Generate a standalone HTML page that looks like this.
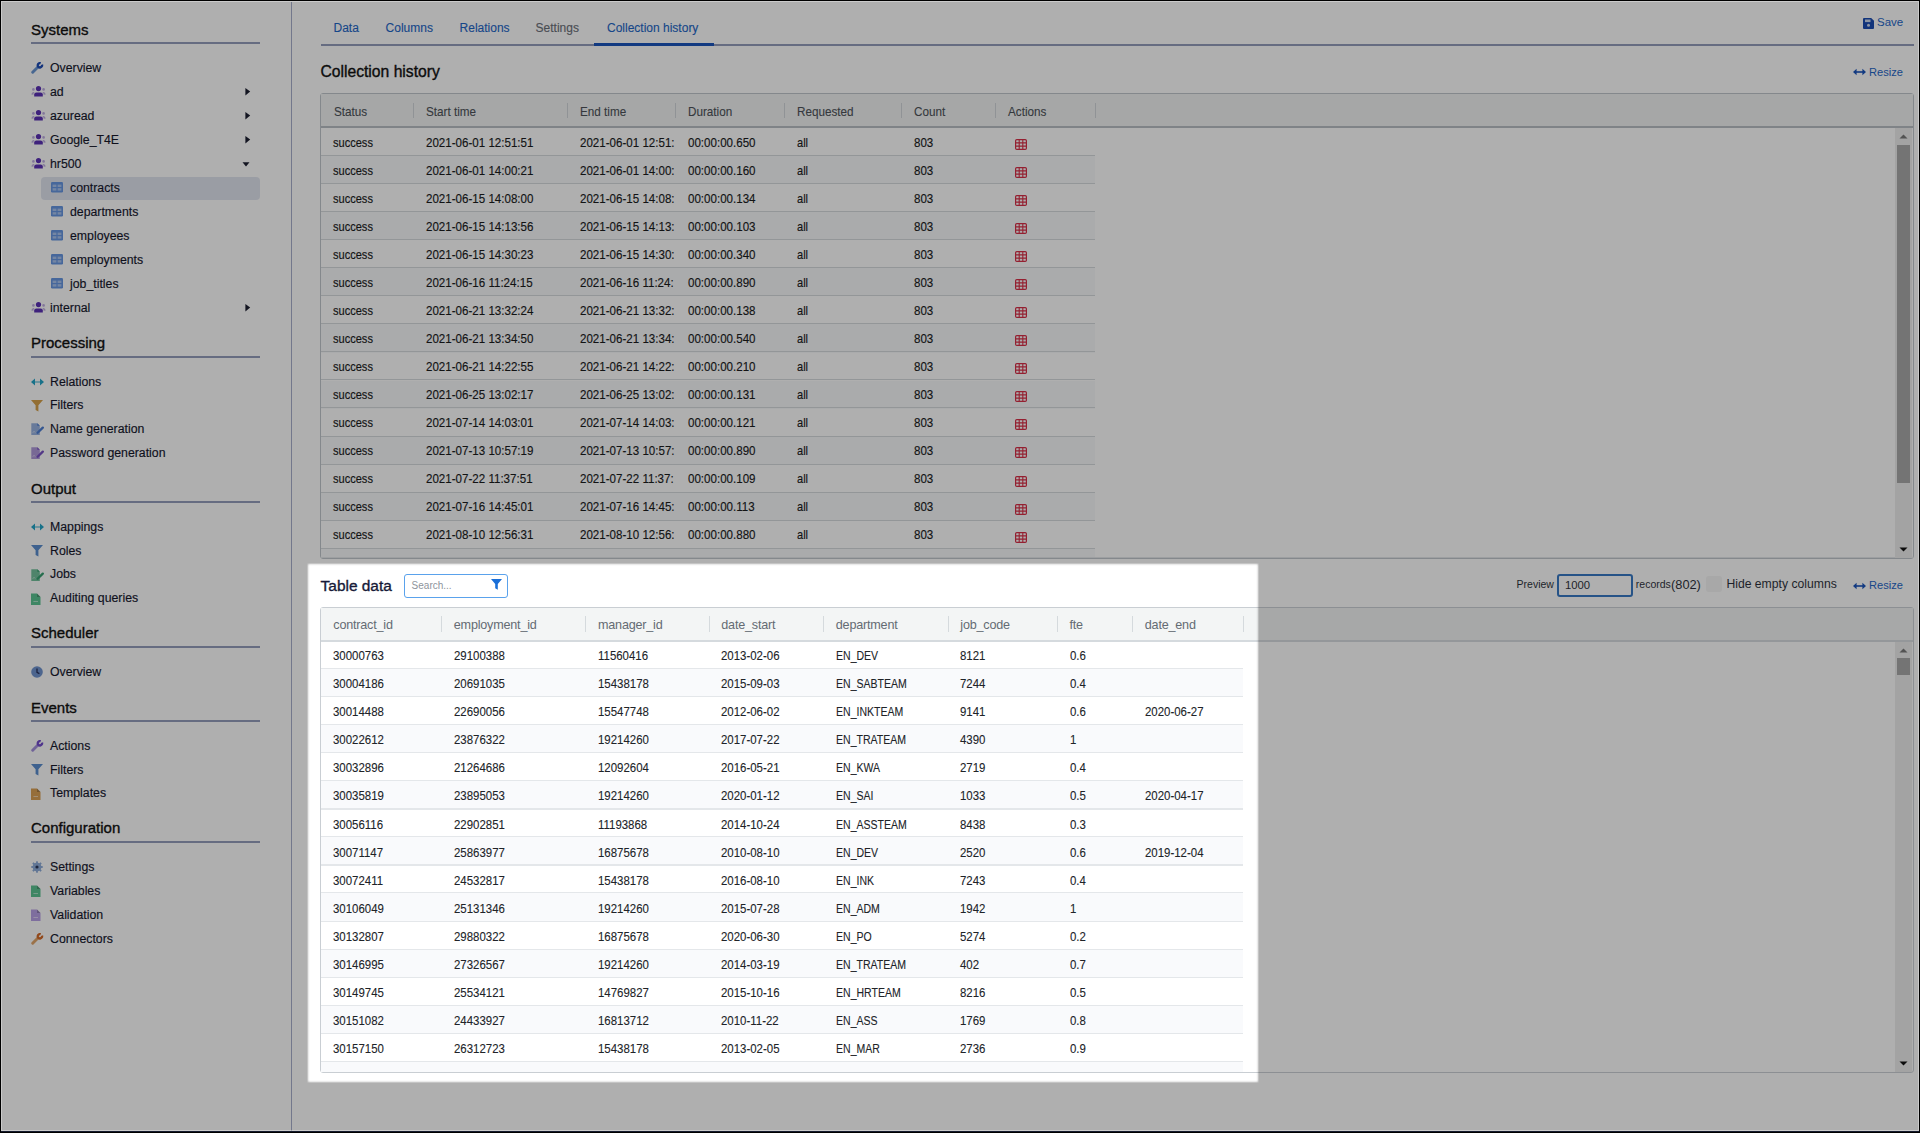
<!DOCTYPE html>
<html><head><meta charset="utf-8"><title>Collection history</title>
<style>
html,body{margin:0;padding:0;}
body{width:1920px;height:1133px;overflow:hidden;background:#000;position:relative;font-family:"Liberation Sans",sans-serif;}
#frame{position:absolute;left:0;top:0;width:1920px;height:1133px;background:#fff;overflow:hidden;}
#frame .t{position:absolute;white-space:nowrap;}
#frame .r{position:absolute;}
#frame .i{position:absolute;display:block;}
#hl{position:absolute;left:307px;top:562.5px;width:952px;height:520px;border-radius:2px;box-shadow:inset 0 0 2px 1px rgba(33,33,33,.36),0 0 0 5000px rgba(33,33,33,.36);pointer-events:none;}
#edge{position:absolute;left:1px;top:1px;width:1918px;height:1130px;box-sizing:border-box;border:1px solid rgba(255,255,255,.35);}
#blk{position:absolute;left:0;top:0;width:1920px;height:1133px;box-sizing:border-box;border:1px solid #000;border-bottom-width:2px;}
#bot{position:absolute;left:1px;top:1131px;width:1918px;height:1px;background:#141a2c;}
</style></head>
<body>
<div id="frame">
<div class="t" style="left:31.00px;top:22.40px;font-size:15px;line-height:15px;color:#000000;-webkit-text-stroke:0.35px #000000;">Systems</div>
<div class="r" style="left:31px;top:42px;width:229px;height:2px;background:#8d97b8;"></div>
<svg class="i" style="left:31px;top:62px" width="13" height="12" viewBox="0 0 13 12"><path d="M1.7 10.3 L7.2 4.8" stroke="#5f8fd0" stroke-width="2.9" stroke-linecap="round"/><path d="M10.97 2.55 A2.2 2.2 0 1 1 9.65 1.23" fill="none" stroke="#0d3fb0" stroke-width="2.3"/></svg>
<div class="t" style="left:50.00px;top:61.59px;font-size:12.3px;line-height:12.3px;color:#05071a;-webkit-text-stroke:0.15px #05071a;">Overview</div>
<svg class="i" style="left:31px;top:86px" width="15" height="11" viewBox="0 0 15 11"><circle cx="7.5" cy="2.6" r="2.6" fill="#4f22b0"/><path d="M3.2 10.6 V8.6 Q3.2 6.4 5.4 6.4 H9.6 Q11.8 6.4 11.8 8.6 V10.6Z" fill="#4f22b0"/><circle cx="2.4" cy="3.4" r="1.3" fill="#4f22b0" opacity=".4"/><circle cx="12.6" cy="3.4" r="1.3" fill="#4f22b0" opacity=".4"/><path d="M0.3 8.6 Q0.6 6 2.6 5.9 L3.6 6 Q2.4 7 2.3 8.8Z" fill="#4f22b0" opacity=".4"/><path d="M14.7 8.6 Q14.4 6 12.4 5.9 L11.4 6 Q12.6 7 12.7 8.8Z" fill="#4f22b0" opacity=".4"/></svg>
<div class="t" style="left:50.00px;top:85.59px;font-size:12.3px;line-height:12.3px;color:#05071a;-webkit-text-stroke:0.15px #05071a;">ad</div>
<svg class="i" style="left:244.6px;top:88px" width="6" height="8" viewBox="0 0 6 8"><path d="M0.4 0 L5.2 3.6 L0.4 7.5Z" fill="#0c0f22"/></svg>
<svg class="i" style="left:31px;top:110px" width="15" height="11" viewBox="0 0 15 11"><circle cx="7.5" cy="2.6" r="2.6" fill="#4f22b0"/><path d="M3.2 10.6 V8.6 Q3.2 6.4 5.4 6.4 H9.6 Q11.8 6.4 11.8 8.6 V10.6Z" fill="#4f22b0"/><circle cx="2.4" cy="3.4" r="1.3" fill="#4f22b0" opacity=".4"/><circle cx="12.6" cy="3.4" r="1.3" fill="#4f22b0" opacity=".4"/><path d="M0.3 8.6 Q0.6 6 2.6 5.9 L3.6 6 Q2.4 7 2.3 8.8Z" fill="#4f22b0" opacity=".4"/><path d="M14.7 8.6 Q14.4 6 12.4 5.9 L11.4 6 Q12.6 7 12.7 8.8Z" fill="#4f22b0" opacity=".4"/></svg>
<div class="t" style="left:50.00px;top:109.59px;font-size:12.3px;line-height:12.3px;color:#05071a;-webkit-text-stroke:0.15px #05071a;">azuread</div>
<svg class="i" style="left:244.6px;top:112px" width="6" height="8" viewBox="0 0 6 8"><path d="M0.4 0 L5.2 3.6 L0.4 7.5Z" fill="#0c0f22"/></svg>
<svg class="i" style="left:31px;top:134px" width="15" height="11" viewBox="0 0 15 11"><circle cx="7.5" cy="2.6" r="2.6" fill="#4f22b0"/><path d="M3.2 10.6 V8.6 Q3.2 6.4 5.4 6.4 H9.6 Q11.8 6.4 11.8 8.6 V10.6Z" fill="#4f22b0"/><circle cx="2.4" cy="3.4" r="1.3" fill="#4f22b0" opacity=".4"/><circle cx="12.6" cy="3.4" r="1.3" fill="#4f22b0" opacity=".4"/><path d="M0.3 8.6 Q0.6 6 2.6 5.9 L3.6 6 Q2.4 7 2.3 8.8Z" fill="#4f22b0" opacity=".4"/><path d="M14.7 8.6 Q14.4 6 12.4 5.9 L11.4 6 Q12.6 7 12.7 8.8Z" fill="#4f22b0" opacity=".4"/></svg>
<div class="t" style="left:50.00px;top:133.59px;font-size:12.3px;line-height:12.3px;color:#05071a;-webkit-text-stroke:0.15px #05071a;">Google_T4E</div>
<svg class="i" style="left:244.6px;top:136px" width="6" height="8" viewBox="0 0 6 8"><path d="M0.4 0 L5.2 3.6 L0.4 7.5Z" fill="#0c0f22"/></svg>
<svg class="i" style="left:31px;top:158px" width="15" height="11" viewBox="0 0 15 11"><circle cx="7.5" cy="2.6" r="2.6" fill="#4f22b0"/><path d="M3.2 10.6 V8.6 Q3.2 6.4 5.4 6.4 H9.6 Q11.8 6.4 11.8 8.6 V10.6Z" fill="#4f22b0"/><circle cx="2.4" cy="3.4" r="1.3" fill="#4f22b0" opacity=".4"/><circle cx="12.6" cy="3.4" r="1.3" fill="#4f22b0" opacity=".4"/><path d="M0.3 8.6 Q0.6 6 2.6 5.9 L3.6 6 Q2.4 7 2.3 8.8Z" fill="#4f22b0" opacity=".4"/><path d="M14.7 8.6 Q14.4 6 12.4 5.9 L11.4 6 Q12.6 7 12.7 8.8Z" fill="#4f22b0" opacity=".4"/></svg>
<div class="t" style="left:50.00px;top:157.59px;font-size:12.3px;line-height:12.3px;color:#05071a;-webkit-text-stroke:0.15px #05071a;">hr500</div>
<svg class="i" style="left:242px;top:162px" width="8" height="6" viewBox="0 0 8 6"><path d="M0.5 0.3 H7.5 L4 4.4Z" fill="#0c0f22"/></svg>
<div class="r" style="left:41px;top:177px;width:219px;height:23px;background:#dfe3ee;border-radius:4px;"></div>
<svg class="i" style="left:51px;top:182px" width="12" height="11" viewBox="0 0 12 11"><rect x="0" y="0" width="12" height="10.5" rx="1.2" fill="#5b8fe0"/><rect x="1.6" y="2.6" width="3.8" height="2.4" fill="#dfe8f8" opacity=".55"/><rect x="6.6" y="2.6" width="3.8" height="2.4" fill="#dfe8f8" opacity=".55"/><rect x="1.6" y="6.2" width="3.8" height="2.4" fill="#dfe8f8" opacity=".55"/><rect x="6.6" y="6.2" width="3.8" height="2.4" fill="#dfe8f8" opacity=".55"/></svg>
<div class="t" style="left:70.00px;top:181.59px;font-size:12.3px;line-height:12.3px;color:#05071a;-webkit-text-stroke:0.15px #05071a;">contracts</div>
<svg class="i" style="left:51px;top:206px" width="12" height="11" viewBox="0 0 12 11"><rect x="0" y="0" width="12" height="10.5" rx="1.2" fill="#5b8fe0"/><rect x="1.6" y="2.6" width="3.8" height="2.4" fill="#dfe8f8" opacity=".55"/><rect x="6.6" y="2.6" width="3.8" height="2.4" fill="#dfe8f8" opacity=".55"/><rect x="1.6" y="6.2" width="3.8" height="2.4" fill="#dfe8f8" opacity=".55"/><rect x="6.6" y="6.2" width="3.8" height="2.4" fill="#dfe8f8" opacity=".55"/></svg>
<div class="t" style="left:70.00px;top:205.59px;font-size:12.3px;line-height:12.3px;color:#05071a;-webkit-text-stroke:0.15px #05071a;">departments</div>
<svg class="i" style="left:51px;top:230px" width="12" height="11" viewBox="0 0 12 11"><rect x="0" y="0" width="12" height="10.5" rx="1.2" fill="#5b8fe0"/><rect x="1.6" y="2.6" width="3.8" height="2.4" fill="#dfe8f8" opacity=".55"/><rect x="6.6" y="2.6" width="3.8" height="2.4" fill="#dfe8f8" opacity=".55"/><rect x="1.6" y="6.2" width="3.8" height="2.4" fill="#dfe8f8" opacity=".55"/><rect x="6.6" y="6.2" width="3.8" height="2.4" fill="#dfe8f8" opacity=".55"/></svg>
<div class="t" style="left:70.00px;top:229.59px;font-size:12.3px;line-height:12.3px;color:#05071a;-webkit-text-stroke:0.15px #05071a;">employees</div>
<svg class="i" style="left:51px;top:254px" width="12" height="11" viewBox="0 0 12 11"><rect x="0" y="0" width="12" height="10.5" rx="1.2" fill="#5b8fe0"/><rect x="1.6" y="2.6" width="3.8" height="2.4" fill="#dfe8f8" opacity=".55"/><rect x="6.6" y="2.6" width="3.8" height="2.4" fill="#dfe8f8" opacity=".55"/><rect x="1.6" y="6.2" width="3.8" height="2.4" fill="#dfe8f8" opacity=".55"/><rect x="6.6" y="6.2" width="3.8" height="2.4" fill="#dfe8f8" opacity=".55"/></svg>
<div class="t" style="left:70.00px;top:253.59px;font-size:12.3px;line-height:12.3px;color:#05071a;-webkit-text-stroke:0.15px #05071a;">employments</div>
<svg class="i" style="left:51px;top:278px" width="12" height="11" viewBox="0 0 12 11"><rect x="0" y="0" width="12" height="10.5" rx="1.2" fill="#5b8fe0"/><rect x="1.6" y="2.6" width="3.8" height="2.4" fill="#dfe8f8" opacity=".55"/><rect x="6.6" y="2.6" width="3.8" height="2.4" fill="#dfe8f8" opacity=".55"/><rect x="1.6" y="6.2" width="3.8" height="2.4" fill="#dfe8f8" opacity=".55"/><rect x="6.6" y="6.2" width="3.8" height="2.4" fill="#dfe8f8" opacity=".55"/></svg>
<div class="t" style="left:70.00px;top:277.59px;font-size:12.3px;line-height:12.3px;color:#05071a;-webkit-text-stroke:0.15px #05071a;">job_titles</div>
<svg class="i" style="left:31px;top:302px" width="15" height="11" viewBox="0 0 15 11"><circle cx="7.5" cy="2.6" r="2.6" fill="#4f22b0"/><path d="M3.2 10.6 V8.6 Q3.2 6.4 5.4 6.4 H9.6 Q11.8 6.4 11.8 8.6 V10.6Z" fill="#4f22b0"/><circle cx="2.4" cy="3.4" r="1.3" fill="#4f22b0" opacity=".4"/><circle cx="12.6" cy="3.4" r="1.3" fill="#4f22b0" opacity=".4"/><path d="M0.3 8.6 Q0.6 6 2.6 5.9 L3.6 6 Q2.4 7 2.3 8.8Z" fill="#4f22b0" opacity=".4"/><path d="M14.7 8.6 Q14.4 6 12.4 5.9 L11.4 6 Q12.6 7 12.7 8.8Z" fill="#4f22b0" opacity=".4"/></svg>
<div class="t" style="left:50.00px;top:301.59px;font-size:12.3px;line-height:12.3px;color:#05071a;-webkit-text-stroke:0.15px #05071a;">internal</div>
<svg class="i" style="left:244.6px;top:304px" width="6" height="8" viewBox="0 0 6 8"><path d="M0.4 0 L5.2 3.6 L0.4 7.5Z" fill="#0c0f22"/></svg>
<div class="t" style="left:31.00px;top:335.40px;font-size:15px;line-height:15px;color:#000000;-webkit-text-stroke:0.35px #000000;">Processing</div>
<div class="r" style="left:31px;top:356px;width:229px;height:2px;background:#8d97b8;"></div>
<svg class="i" style="left:31px;top:378.0px" width="13" height="8" viewBox="0 0 13 8"><path d="M0 4 L4 0.4 V7.6Z M13 4 L9 0.4 V7.6Z" fill="#139fc4"/><rect x="3" y="3.2" width="7" height="1.6" fill="#139fc4" opacity=".55"/></svg>
<div class="t" style="left:50.00px;top:375.59px;font-size:12.3px;line-height:12.3px;color:#05071a;-webkit-text-stroke:0.15px #05071a;">Relations</div>
<svg class="i" style="left:31px;top:399.7px" width="12" height="12" viewBox="0 0 12 12"><path d="M0 0 H12 L7.4 5.2 V11.6 L4.6 10 V5.2Z" fill="#d39a3c"/></svg>
<div class="t" style="left:50.00px;top:399.29px;font-size:12.3px;line-height:12.3px;color:#05071a;-webkit-text-stroke:0.15px #05071a;">Filters</div>
<svg class="i" style="left:31px;top:423.4px" width="13" height="12" viewBox="0 0 13 12"><path d="M0.3 0.2 H6.3 L8.8 2.7 V11.9 H0.3Z" fill="#7e9fd8" opacity=".85"/><path d="M6.3 0.2 V2.7 H8.8Z" fill="#3f74d0"/><path d="M1.6 10 L3 8.2 L4.2 9.6" stroke="#fff" stroke-width=".7" fill="none" opacity=".6"/><path d="M6.6 9.8 L11.8 4.6" stroke="#3f74d0" stroke-width="2.3" stroke-linecap="round"/></svg>
<div class="t" style="left:50.00px;top:422.99px;font-size:12.3px;line-height:12.3px;color:#05071a;-webkit-text-stroke:0.15px #05071a;">Name generation</div>
<svg class="i" style="left:31px;top:447.1px" width="13" height="12" viewBox="0 0 13 12"><path d="M0.3 0.2 H6.3 L8.8 2.7 V11.9 H0.3Z" fill="#9a7fd0" opacity=".85"/><path d="M6.3 0.2 V2.7 H8.8Z" fill="#6f46c0"/><path d="M1.6 10 L3 8.2 L4.2 9.6" stroke="#fff" stroke-width=".7" fill="none" opacity=".6"/><path d="M6.6 9.8 L11.8 4.6" stroke="#6f46c0" stroke-width="2.3" stroke-linecap="round"/></svg>
<div class="t" style="left:50.00px;top:446.69px;font-size:12.3px;line-height:12.3px;color:#05071a;-webkit-text-stroke:0.15px #05071a;">Password generation</div>
<div class="t" style="left:31.00px;top:481.10px;font-size:15px;line-height:15px;color:#000000;-webkit-text-stroke:0.35px #000000;">Output</div>
<div class="r" style="left:31px;top:501px;width:229px;height:2px;background:#8d97b8;"></div>
<svg class="i" style="left:31px;top:523.4px" width="13" height="8" viewBox="0 0 13 8"><path d="M0 4 L4 0.4 V7.6Z M13 4 L9 0.4 V7.6Z" fill="#139fc4"/><rect x="3" y="3.2" width="7" height="1.6" fill="#139fc4" opacity=".55"/></svg>
<div class="t" style="left:50.00px;top:520.99px;font-size:12.3px;line-height:12.3px;color:#05071a;-webkit-text-stroke:0.15px #05071a;">Mappings</div>
<svg class="i" style="left:31px;top:545.1px" width="12" height="12" viewBox="0 0 12 12"><path d="M0 0 H12 L7.4 5.2 V11.6 L4.6 10 V5.2Z" fill="#4f86cc"/></svg>
<div class="t" style="left:50.00px;top:544.69px;font-size:12.3px;line-height:12.3px;color:#05071a;-webkit-text-stroke:0.15px #05071a;">Roles</div>
<svg class="i" style="left:31px;top:568.8px" width="13" height="12" viewBox="0 0 13 12"><path d="M0.3 0.2 H6.3 L8.8 2.7 V11.9 H0.3Z" fill="#4fb083" opacity=".85"/><path d="M6.3 0.2 V2.7 H8.8Z" fill="#2a9a68"/><path d="M1.6 10 L3 8.2 L4.2 9.6" stroke="#fff" stroke-width=".7" fill="none" opacity=".6"/><path d="M6.6 9.8 L11.8 4.6" stroke="#2a9a68" stroke-width="2.3" stroke-linecap="round"/></svg>
<div class="t" style="left:50.00px;top:568.39px;font-size:12.3px;line-height:12.3px;color:#05071a;-webkit-text-stroke:0.15px #05071a;">Jobs</div>
<svg class="i" style="left:31px;top:592.5px" width="10" height="12" viewBox="0 0 10 12"><path d="M0 0.5 H6 L9.5 4 V12 H0Z" fill="#4fbf8a"/><path d="M6 0.5 V4 H9.5Z" fill="#000" opacity=".25"/><rect x="2.4" y="8" width="4.6" height="1" fill="#fff" opacity=".5"/></svg>
<div class="t" style="left:50.00px;top:592.09px;font-size:12.3px;line-height:12.3px;color:#05071a;-webkit-text-stroke:0.15px #05071a;">Auditing queries</div>
<div class="t" style="left:31.00px;top:625.40px;font-size:15px;line-height:15px;color:#000000;-webkit-text-stroke:0.35px #000000;">Scheduler</div>
<div class="r" style="left:31px;top:646px;width:229px;height:2px;background:#8d97b8;"></div>
<svg class="i" style="left:31px;top:666px" width="12" height="12" viewBox="0 0 12 12"><circle cx="6" cy="6" r="5.8" fill="#3f6fbf" opacity=".8"/><path d="M6 2.6 V6.4 L8.4 7.6" stroke="#1a2350" stroke-width="1.3" fill="none"/></svg>
<div class="t" style="left:50.00px;top:665.59px;font-size:12.3px;line-height:12.3px;color:#05071a;-webkit-text-stroke:0.15px #05071a;">Overview</div>
<div class="t" style="left:31.00px;top:699.60px;font-size:15px;line-height:15px;color:#000000;-webkit-text-stroke:0.35px #000000;">Events</div>
<div class="r" style="left:31px;top:720px;width:229px;height:2px;background:#8d97b8;"></div>
<svg class="i" style="left:31px;top:740.1px" width="13" height="12" viewBox="0 0 13 12"><path d="M1.7 10.3 L7.2 4.8" stroke="#9f88dc" stroke-width="2.9" stroke-linecap="round"/><path d="M10.97 2.55 A2.2 2.2 0 1 1 9.65 1.23" fill="none" stroke="#6a3fc8" stroke-width="2.3"/></svg>
<div class="t" style="left:50.00px;top:739.69px;font-size:12.3px;line-height:12.3px;color:#05071a;-webkit-text-stroke:0.15px #05071a;">Actions</div>
<svg class="i" style="left:31px;top:764.0px" width="12" height="12" viewBox="0 0 12 12"><path d="M0 0 H12 L7.4 5.2 V11.6 L4.6 10 V5.2Z" fill="#4f86cc"/></svg>
<div class="t" style="left:50.00px;top:763.59px;font-size:12.3px;line-height:12.3px;color:#05071a;-webkit-text-stroke:0.15px #05071a;">Filters</div>
<svg class="i" style="left:31px;top:787.9px" width="10" height="12" viewBox="0 0 10 12"><path d="M0 0.5 H6 L9.5 4 V12 H0Z" fill="#d89a48"/><path d="M6 0.5 V4 H9.5Z" fill="#000" opacity=".25"/><rect x="2.4" y="8" width="4.6" height="1" fill="#fff" opacity=".5"/></svg>
<div class="t" style="left:50.00px;top:787.49px;font-size:12.3px;line-height:12.3px;color:#05071a;-webkit-text-stroke:0.15px #05071a;">Templates</div>
<div class="t" style="left:31.00px;top:820.10px;font-size:15px;line-height:15px;color:#000000;-webkit-text-stroke:0.35px #000000;">Configuration</div>
<div class="r" style="left:31px;top:841px;width:229px;height:2px;background:#8d97b8;"></div>
<svg class="i" style="left:31px;top:861.2px" width="12" height="12" viewBox="0 0 12 12"><path d="M10.29 5.04 L11.84 5.18 L11.84 6.82 L10.29 6.96 L9.72 8.36 L10.71 9.55 L9.55 10.71 L8.36 9.72 L6.96 10.29 L6.82 11.84 L5.18 11.84 L5.04 10.29 L3.64 9.72 L2.45 10.71 L1.29 9.55 L2.28 8.36 L1.71 6.96 L0.16 6.82 L0.16 5.18 L1.71 5.04 L2.28 3.64 L1.29 2.45 L2.45 1.29 L3.64 2.28 L5.04 1.71 L5.18 0.16 L6.82 0.16 L6.96 1.71 L8.36 2.28 L9.55 1.29 L10.71 2.45 L9.72 3.64Z" fill="#86a6d6"/><circle cx="6" cy="6" r="1.6" fill="#1c2a50"/></svg>
<div class="t" style="left:50.00px;top:860.79px;font-size:12.3px;line-height:12.3px;color:#05071a;-webkit-text-stroke:0.15px #05071a;">Settings</div>
<svg class="i" style="left:31px;top:885.2px" width="10" height="12" viewBox="0 0 10 12"><path d="M0 0.5 H6 L9.5 4 V12 H0Z" fill="#4fbf8a"/><path d="M6 0.5 V4 H9.5Z" fill="#000" opacity=".25"/><rect x="2.4" y="8" width="4.6" height="1" fill="#fff" opacity=".5"/></svg>
<div class="t" style="left:50.00px;top:884.79px;font-size:12.3px;line-height:12.3px;color:#05071a;-webkit-text-stroke:0.15px #05071a;">Variables</div>
<svg class="i" style="left:31px;top:909.2px" width="10" height="12" viewBox="0 0 10 12"><path d="M0 0.5 H6 L9.5 4 V12 H0Z" fill="#b39ae4"/><path d="M6 0.5 V4 H9.5Z" fill="#000" opacity=".25"/><rect x="2.4" y="8" width="4.6" height="1" fill="#fff" opacity=".5"/></svg>
<div class="t" style="left:50.00px;top:908.79px;font-size:12.3px;line-height:12.3px;color:#05071a;-webkit-text-stroke:0.15px #05071a;">Validation</div>
<svg class="i" style="left:31px;top:933.2px" width="13" height="12" viewBox="0 0 13 12"><path d="M1.7 10.3 L7.2 4.8" stroke="#e0a060" stroke-width="2.9" stroke-linecap="round"/><path d="M10.97 2.55 A2.2 2.2 0 1 1 9.65 1.23" fill="none" stroke="#d2601a" stroke-width="2.3"/></svg>
<div class="t" style="left:50.00px;top:932.79px;font-size:12.3px;line-height:12.3px;color:#05071a;-webkit-text-stroke:0.15px #05071a;">Connectors</div>
<div class="r" style="left:291px;top:2px;width:1px;height:1129px;background:#a2aac8;"></div>
<div class="t" style="left:333.50px;top:21.74px;font-size:12px;line-height:12px;color:#0f5bc4;-webkit-text-stroke:0.12px #0f5bc4;">Data</div>
<div class="t" style="left:385.60px;top:21.74px;font-size:12px;line-height:12px;color:#0f5bc4;-webkit-text-stroke:0.12px #0f5bc4;">Columns</div>
<div class="t" style="left:459.60px;top:21.74px;font-size:12px;line-height:12px;color:#0f5bc4;-webkit-text-stroke:0.12px #0f5bc4;">Relations</div>
<div class="t" style="left:535.60px;top:21.74px;font-size:12px;line-height:12px;color:#5f6670;-webkit-text-stroke:0.12px #5f6670;">Settings</div>
<div class="t" style="left:607.00px;top:21.74px;font-size:12px;line-height:12px;color:#0f5bc4;-webkit-text-stroke:0.12px #0f5bc4;">Collection history</div>
<div class="r" style="left:321px;top:44px;width:1593px;height:2px;background:#8d97b8;"></div>
<div class="r" style="left:594px;top:43px;width:120px;height:3px;background:#0a48b8;"></div>
<svg class="i" style="left:1863px;top:18px" width="11" height="11" viewBox="0 0 11 11"><path d="M0 1 Q0 0 1 0 H8.2 L11 2.8 V10 Q11 11 10 11 H1 Q0 11 0 10Z" fill="#0a3fae"/><rect x="2" y="1.5" width="5.5" height="2.6" fill="#c9d6ee"/><circle cx="5.5" cy="7.3" r="1.5" fill="#c9d6ee"/></svg>
<div class="t" style="left:1877.00px;top:17.47px;font-size:11.5px;line-height:11.5px;color:#0f5bc4;">Save</div>
<div class="t" style="left:320.40px;top:63.71px;font-size:15.7px;line-height:15.7px;color:#000000;-webkit-text-stroke:0.35px #000000;">Collection history</div>
<svg class="i" style="left:1853px;top:68px" width="13" height="8" viewBox="0 0 13 8"><path d="M0 4 L3.6 0.8 V7.2Z M13 4 L9.4 0.8 V7.2Z" fill="#0a48b8"/><rect x="3" y="3.2" width="7" height="1.6" fill="#0a48b8"/></svg>
<div class="t" style="left:1869.00px;top:66.60px;font-size:11.1px;line-height:11.1px;color:#0f5bc4;">Resize</div>
<div class="r" style="left:320px;top:93px;width:1594px;height:466px;background:#fff;box-sizing:border-box;border:1px solid #bcc2c8;border-radius:3px;"></div>
<div class="r" style="left:321px;top:94px;width:1592px;height:33px;background:#f1f3f3;"></div>
<div class="r" style="left:321px;top:126px;width:1592px;height:2px;background:#b4bbc1;"></div>
<div class="t" style="left:333.60px;top:105.10px;font-size:13px;line-height:13px;color:#40464d;-webkit-text-stroke:0.1px #40464d;transform:scaleX(0.9);transform-origin:0 0;">Status</div>
<div class="t" style="left:426.10px;top:105.10px;font-size:13px;line-height:13px;color:#40464d;-webkit-text-stroke:0.1px #40464d;transform:scaleX(0.9);transform-origin:0 0;">Start time</div>
<div class="t" style="left:580.30px;top:105.10px;font-size:13px;line-height:13px;color:#40464d;-webkit-text-stroke:0.1px #40464d;transform:scaleX(0.9);transform-origin:0 0;">End time</div>
<div class="t" style="left:688.20px;top:105.10px;font-size:13px;line-height:13px;color:#40464d;-webkit-text-stroke:0.1px #40464d;transform:scaleX(0.9);transform-origin:0 0;">Duration</div>
<div class="t" style="left:796.90px;top:105.10px;font-size:13px;line-height:13px;color:#40464d;-webkit-text-stroke:0.1px #40464d;transform:scaleX(0.9);transform-origin:0 0;">Requested</div>
<div class="t" style="left:914.40px;top:105.10px;font-size:13px;line-height:13px;color:#40464d;-webkit-text-stroke:0.1px #40464d;transform:scaleX(0.9);transform-origin:0 0;">Count</div>
<div class="t" style="left:1008.10px;top:105.10px;font-size:13px;line-height:13px;color:#40464d;-webkit-text-stroke:0.1px #40464d;transform:scaleX(0.9);transform-origin:0 0;">Actions</div>
<div class="r" style="left:413.0px;top:103px;width:1px;height:15px;background:#cfd4d8;"></div>
<div class="r" style="left:567.2px;top:103px;width:1px;height:15px;background:#cfd4d8;"></div>
<div class="r" style="left:675.1px;top:103px;width:1px;height:15px;background:#cfd4d8;"></div>
<div class="r" style="left:783.8px;top:103px;width:1px;height:15px;background:#cfd4d8;"></div>
<div class="r" style="left:901.3px;top:103px;width:1px;height:15px;background:#cfd4d8;"></div>
<div class="r" style="left:995.0px;top:103px;width:1px;height:15px;background:#cfd4d8;"></div>
<div class="r" style="left:1094.7px;top:103px;width:1px;height:15px;background:#cfd4d8;"></div>
<div class="r" style="left:321px;top:154.8px;width:774px;height:1px;background:#d3d8dc;"></div>
<div class="t" style="left:333.20px;top:135.50px;font-size:13px;line-height:13px;color:#0a0b0d;-webkit-text-stroke:0.15px #0a0b0d;transform:scaleX(0.85);transform-origin:0 0;">success</div>
<div class="t" style="left:425.70px;top:135.50px;font-size:13px;line-height:13px;color:#0a0b0d;-webkit-text-stroke:0.15px #0a0b0d;transform:scaleX(0.89);transform-origin:0 0;">2021-06-01 12:51:51</div>
<div class="t" style="left:579.90px;top:135.50px;font-size:13px;line-height:13px;color:#0a0b0d;-webkit-text-stroke:0.15px #0a0b0d;transform:scaleX(0.89);transform-origin:0 0;">2021-06-01 12:51:</div>
<div class="t" style="left:687.80px;top:135.50px;font-size:13px;line-height:13px;color:#0a0b0d;-webkit-text-stroke:0.15px #0a0b0d;transform:scaleX(0.89);transform-origin:0 0;">00:00:00.650</div>
<div class="t" style="left:796.50px;top:135.50px;font-size:13px;line-height:13px;color:#0a0b0d;-webkit-text-stroke:0.15px #0a0b0d;transform:scaleX(0.85);transform-origin:0 0;">all</div>
<div class="t" style="left:914.00px;top:135.50px;font-size:13px;line-height:13px;color:#0a0b0d;-webkit-text-stroke:0.15px #0a0b0d;transform:scaleX(0.89);transform-origin:0 0;">803</div>
<svg class="i" style="left:1015px;top:138.7px" width="12" height="11" viewBox="0 0 12 11"><rect x="0.6" y="0.6" width="10.8" height="9.8" rx="1.2" fill="none" stroke="#d5203a" stroke-width="1.2"/><path d="M0.6 3.9 H11.4 M0.6 7.1 H11.4 M4.2 0.6 V10.4 M7.8 0.6 V10.4" stroke="#d5203a" stroke-width="1.1"/></svg>
<div class="r" style="left:321px;top:156.07px;width:774px;height:28.07px;background:#f8f9fb;"></div>
<div class="r" style="left:321px;top:182.87px;width:774px;height:1px;background:#d3d8dc;"></div>
<div class="t" style="left:333.20px;top:163.57px;font-size:13px;line-height:13px;color:#0a0b0d;-webkit-text-stroke:0.15px #0a0b0d;transform:scaleX(0.85);transform-origin:0 0;">success</div>
<div class="t" style="left:425.70px;top:163.57px;font-size:13px;line-height:13px;color:#0a0b0d;-webkit-text-stroke:0.15px #0a0b0d;transform:scaleX(0.89);transform-origin:0 0;">2021-06-01 14:00:21</div>
<div class="t" style="left:579.90px;top:163.57px;font-size:13px;line-height:13px;color:#0a0b0d;-webkit-text-stroke:0.15px #0a0b0d;transform:scaleX(0.89);transform-origin:0 0;">2021-06-01 14:00:</div>
<div class="t" style="left:687.80px;top:163.57px;font-size:13px;line-height:13px;color:#0a0b0d;-webkit-text-stroke:0.15px #0a0b0d;transform:scaleX(0.89);transform-origin:0 0;">00:00:00.160</div>
<div class="t" style="left:796.50px;top:163.57px;font-size:13px;line-height:13px;color:#0a0b0d;-webkit-text-stroke:0.15px #0a0b0d;transform:scaleX(0.85);transform-origin:0 0;">all</div>
<div class="t" style="left:914.00px;top:163.57px;font-size:13px;line-height:13px;color:#0a0b0d;-webkit-text-stroke:0.15px #0a0b0d;transform:scaleX(0.89);transform-origin:0 0;">803</div>
<svg class="i" style="left:1015px;top:166.77px" width="12" height="11" viewBox="0 0 12 11"><rect x="0.6" y="0.6" width="10.8" height="9.8" rx="1.2" fill="none" stroke="#d5203a" stroke-width="1.2"/><path d="M0.6 3.9 H11.4 M0.6 7.1 H11.4 M4.2 0.6 V10.4 M7.8 0.6 V10.4" stroke="#d5203a" stroke-width="1.1"/></svg>
<div class="r" style="left:321px;top:210.94px;width:774px;height:1px;background:#d3d8dc;"></div>
<div class="t" style="left:333.20px;top:191.64px;font-size:13px;line-height:13px;color:#0a0b0d;-webkit-text-stroke:0.15px #0a0b0d;transform:scaleX(0.85);transform-origin:0 0;">success</div>
<div class="t" style="left:425.70px;top:191.64px;font-size:13px;line-height:13px;color:#0a0b0d;-webkit-text-stroke:0.15px #0a0b0d;transform:scaleX(0.89);transform-origin:0 0;">2021-06-15 14:08:00</div>
<div class="t" style="left:579.90px;top:191.64px;font-size:13px;line-height:13px;color:#0a0b0d;-webkit-text-stroke:0.15px #0a0b0d;transform:scaleX(0.89);transform-origin:0 0;">2021-06-15 14:08:</div>
<div class="t" style="left:687.80px;top:191.64px;font-size:13px;line-height:13px;color:#0a0b0d;-webkit-text-stroke:0.15px #0a0b0d;transform:scaleX(0.89);transform-origin:0 0;">00:00:00.134</div>
<div class="t" style="left:796.50px;top:191.64px;font-size:13px;line-height:13px;color:#0a0b0d;-webkit-text-stroke:0.15px #0a0b0d;transform:scaleX(0.85);transform-origin:0 0;">all</div>
<div class="t" style="left:914.00px;top:191.64px;font-size:13px;line-height:13px;color:#0a0b0d;-webkit-text-stroke:0.15px #0a0b0d;transform:scaleX(0.89);transform-origin:0 0;">803</div>
<svg class="i" style="left:1015px;top:194.84px" width="12" height="11" viewBox="0 0 12 11"><rect x="0.6" y="0.6" width="10.8" height="9.8" rx="1.2" fill="none" stroke="#d5203a" stroke-width="1.2"/><path d="M0.6 3.9 H11.4 M0.6 7.1 H11.4 M4.2 0.6 V10.4 M7.8 0.6 V10.4" stroke="#d5203a" stroke-width="1.1"/></svg>
<div class="r" style="left:321px;top:212.21px;width:774px;height:28.07px;background:#f8f9fb;"></div>
<div class="r" style="left:321px;top:239.01px;width:774px;height:1px;background:#d3d8dc;"></div>
<div class="t" style="left:333.20px;top:219.71px;font-size:13px;line-height:13px;color:#0a0b0d;-webkit-text-stroke:0.15px #0a0b0d;transform:scaleX(0.85);transform-origin:0 0;">success</div>
<div class="t" style="left:425.70px;top:219.71px;font-size:13px;line-height:13px;color:#0a0b0d;-webkit-text-stroke:0.15px #0a0b0d;transform:scaleX(0.89);transform-origin:0 0;">2021-06-15 14:13:56</div>
<div class="t" style="left:579.90px;top:219.71px;font-size:13px;line-height:13px;color:#0a0b0d;-webkit-text-stroke:0.15px #0a0b0d;transform:scaleX(0.89);transform-origin:0 0;">2021-06-15 14:13:</div>
<div class="t" style="left:687.80px;top:219.71px;font-size:13px;line-height:13px;color:#0a0b0d;-webkit-text-stroke:0.15px #0a0b0d;transform:scaleX(0.89);transform-origin:0 0;">00:00:00.103</div>
<div class="t" style="left:796.50px;top:219.71px;font-size:13px;line-height:13px;color:#0a0b0d;-webkit-text-stroke:0.15px #0a0b0d;transform:scaleX(0.85);transform-origin:0 0;">all</div>
<div class="t" style="left:914.00px;top:219.71px;font-size:13px;line-height:13px;color:#0a0b0d;-webkit-text-stroke:0.15px #0a0b0d;transform:scaleX(0.89);transform-origin:0 0;">803</div>
<svg class="i" style="left:1015px;top:222.91px" width="12" height="11" viewBox="0 0 12 11"><rect x="0.6" y="0.6" width="10.8" height="9.8" rx="1.2" fill="none" stroke="#d5203a" stroke-width="1.2"/><path d="M0.6 3.9 H11.4 M0.6 7.1 H11.4 M4.2 0.6 V10.4 M7.8 0.6 V10.4" stroke="#d5203a" stroke-width="1.1"/></svg>
<div class="r" style="left:321px;top:267.08px;width:774px;height:1px;background:#d3d8dc;"></div>
<div class="t" style="left:333.20px;top:247.78px;font-size:13px;line-height:13px;color:#0a0b0d;-webkit-text-stroke:0.15px #0a0b0d;transform:scaleX(0.85);transform-origin:0 0;">success</div>
<div class="t" style="left:425.70px;top:247.78px;font-size:13px;line-height:13px;color:#0a0b0d;-webkit-text-stroke:0.15px #0a0b0d;transform:scaleX(0.89);transform-origin:0 0;">2021-06-15 14:30:23</div>
<div class="t" style="left:579.90px;top:247.78px;font-size:13px;line-height:13px;color:#0a0b0d;-webkit-text-stroke:0.15px #0a0b0d;transform:scaleX(0.89);transform-origin:0 0;">2021-06-15 14:30:</div>
<div class="t" style="left:687.80px;top:247.78px;font-size:13px;line-height:13px;color:#0a0b0d;-webkit-text-stroke:0.15px #0a0b0d;transform:scaleX(0.89);transform-origin:0 0;">00:00:00.340</div>
<div class="t" style="left:796.50px;top:247.78px;font-size:13px;line-height:13px;color:#0a0b0d;-webkit-text-stroke:0.15px #0a0b0d;transform:scaleX(0.85);transform-origin:0 0;">all</div>
<div class="t" style="left:914.00px;top:247.78px;font-size:13px;line-height:13px;color:#0a0b0d;-webkit-text-stroke:0.15px #0a0b0d;transform:scaleX(0.89);transform-origin:0 0;">803</div>
<svg class="i" style="left:1015px;top:250.98px" width="12" height="11" viewBox="0 0 12 11"><rect x="0.6" y="0.6" width="10.8" height="9.8" rx="1.2" fill="none" stroke="#d5203a" stroke-width="1.2"/><path d="M0.6 3.9 H11.4 M0.6 7.1 H11.4 M4.2 0.6 V10.4 M7.8 0.6 V10.4" stroke="#d5203a" stroke-width="1.1"/></svg>
<div class="r" style="left:321px;top:268.35px;width:774px;height:28.07px;background:#f8f9fb;"></div>
<div class="r" style="left:321px;top:295.15px;width:774px;height:1px;background:#d3d8dc;"></div>
<div class="t" style="left:333.20px;top:275.85px;font-size:13px;line-height:13px;color:#0a0b0d;-webkit-text-stroke:0.15px #0a0b0d;transform:scaleX(0.85);transform-origin:0 0;">success</div>
<div class="t" style="left:425.70px;top:275.85px;font-size:13px;line-height:13px;color:#0a0b0d;-webkit-text-stroke:0.15px #0a0b0d;transform:scaleX(0.89);transform-origin:0 0;">2021-06-16 11:24:15</div>
<div class="t" style="left:579.90px;top:275.85px;font-size:13px;line-height:13px;color:#0a0b0d;-webkit-text-stroke:0.15px #0a0b0d;transform:scaleX(0.89);transform-origin:0 0;">2021-06-16 11:24:</div>
<div class="t" style="left:687.80px;top:275.85px;font-size:13px;line-height:13px;color:#0a0b0d;-webkit-text-stroke:0.15px #0a0b0d;transform:scaleX(0.89);transform-origin:0 0;">00:00:00.890</div>
<div class="t" style="left:796.50px;top:275.85px;font-size:13px;line-height:13px;color:#0a0b0d;-webkit-text-stroke:0.15px #0a0b0d;transform:scaleX(0.85);transform-origin:0 0;">all</div>
<div class="t" style="left:914.00px;top:275.85px;font-size:13px;line-height:13px;color:#0a0b0d;-webkit-text-stroke:0.15px #0a0b0d;transform:scaleX(0.89);transform-origin:0 0;">803</div>
<svg class="i" style="left:1015px;top:279.05px" width="12" height="11" viewBox="0 0 12 11"><rect x="0.6" y="0.6" width="10.8" height="9.8" rx="1.2" fill="none" stroke="#d5203a" stroke-width="1.2"/><path d="M0.6 3.9 H11.4 M0.6 7.1 H11.4 M4.2 0.6 V10.4 M7.8 0.6 V10.4" stroke="#d5203a" stroke-width="1.1"/></svg>
<div class="r" style="left:321px;top:323.22px;width:774px;height:1px;background:#d3d8dc;"></div>
<div class="t" style="left:333.20px;top:303.92px;font-size:13px;line-height:13px;color:#0a0b0d;-webkit-text-stroke:0.15px #0a0b0d;transform:scaleX(0.85);transform-origin:0 0;">success</div>
<div class="t" style="left:425.70px;top:303.92px;font-size:13px;line-height:13px;color:#0a0b0d;-webkit-text-stroke:0.15px #0a0b0d;transform:scaleX(0.89);transform-origin:0 0;">2021-06-21 13:32:24</div>
<div class="t" style="left:579.90px;top:303.92px;font-size:13px;line-height:13px;color:#0a0b0d;-webkit-text-stroke:0.15px #0a0b0d;transform:scaleX(0.89);transform-origin:0 0;">2021-06-21 13:32:</div>
<div class="t" style="left:687.80px;top:303.92px;font-size:13px;line-height:13px;color:#0a0b0d;-webkit-text-stroke:0.15px #0a0b0d;transform:scaleX(0.89);transform-origin:0 0;">00:00:00.138</div>
<div class="t" style="left:796.50px;top:303.92px;font-size:13px;line-height:13px;color:#0a0b0d;-webkit-text-stroke:0.15px #0a0b0d;transform:scaleX(0.85);transform-origin:0 0;">all</div>
<div class="t" style="left:914.00px;top:303.92px;font-size:13px;line-height:13px;color:#0a0b0d;-webkit-text-stroke:0.15px #0a0b0d;transform:scaleX(0.89);transform-origin:0 0;">803</div>
<svg class="i" style="left:1015px;top:307.12px" width="12" height="11" viewBox="0 0 12 11"><rect x="0.6" y="0.6" width="10.8" height="9.8" rx="1.2" fill="none" stroke="#d5203a" stroke-width="1.2"/><path d="M0.6 3.9 H11.4 M0.6 7.1 H11.4 M4.2 0.6 V10.4 M7.8 0.6 V10.4" stroke="#d5203a" stroke-width="1.1"/></svg>
<div class="r" style="left:321px;top:324.49px;width:774px;height:28.07px;background:#f8f9fb;"></div>
<div class="r" style="left:321px;top:351.29px;width:774px;height:1px;background:#d3d8dc;"></div>
<div class="t" style="left:333.20px;top:331.99px;font-size:13px;line-height:13px;color:#0a0b0d;-webkit-text-stroke:0.15px #0a0b0d;transform:scaleX(0.85);transform-origin:0 0;">success</div>
<div class="t" style="left:425.70px;top:331.99px;font-size:13px;line-height:13px;color:#0a0b0d;-webkit-text-stroke:0.15px #0a0b0d;transform:scaleX(0.89);transform-origin:0 0;">2021-06-21 13:34:50</div>
<div class="t" style="left:579.90px;top:331.99px;font-size:13px;line-height:13px;color:#0a0b0d;-webkit-text-stroke:0.15px #0a0b0d;transform:scaleX(0.89);transform-origin:0 0;">2021-06-21 13:34:</div>
<div class="t" style="left:687.80px;top:331.99px;font-size:13px;line-height:13px;color:#0a0b0d;-webkit-text-stroke:0.15px #0a0b0d;transform:scaleX(0.89);transform-origin:0 0;">00:00:00.540</div>
<div class="t" style="left:796.50px;top:331.99px;font-size:13px;line-height:13px;color:#0a0b0d;-webkit-text-stroke:0.15px #0a0b0d;transform:scaleX(0.85);transform-origin:0 0;">all</div>
<div class="t" style="left:914.00px;top:331.99px;font-size:13px;line-height:13px;color:#0a0b0d;-webkit-text-stroke:0.15px #0a0b0d;transform:scaleX(0.89);transform-origin:0 0;">803</div>
<svg class="i" style="left:1015px;top:335.19px" width="12" height="11" viewBox="0 0 12 11"><rect x="0.6" y="0.6" width="10.8" height="9.8" rx="1.2" fill="none" stroke="#d5203a" stroke-width="1.2"/><path d="M0.6 3.9 H11.4 M0.6 7.1 H11.4 M4.2 0.6 V10.4 M7.8 0.6 V10.4" stroke="#d5203a" stroke-width="1.1"/></svg>
<div class="r" style="left:321px;top:379.36px;width:774px;height:1px;background:#d3d8dc;"></div>
<div class="t" style="left:333.20px;top:360.06px;font-size:13px;line-height:13px;color:#0a0b0d;-webkit-text-stroke:0.15px #0a0b0d;transform:scaleX(0.85);transform-origin:0 0;">success</div>
<div class="t" style="left:425.70px;top:360.06px;font-size:13px;line-height:13px;color:#0a0b0d;-webkit-text-stroke:0.15px #0a0b0d;transform:scaleX(0.89);transform-origin:0 0;">2021-06-21 14:22:55</div>
<div class="t" style="left:579.90px;top:360.06px;font-size:13px;line-height:13px;color:#0a0b0d;-webkit-text-stroke:0.15px #0a0b0d;transform:scaleX(0.89);transform-origin:0 0;">2021-06-21 14:22:</div>
<div class="t" style="left:687.80px;top:360.06px;font-size:13px;line-height:13px;color:#0a0b0d;-webkit-text-stroke:0.15px #0a0b0d;transform:scaleX(0.89);transform-origin:0 0;">00:00:00.210</div>
<div class="t" style="left:796.50px;top:360.06px;font-size:13px;line-height:13px;color:#0a0b0d;-webkit-text-stroke:0.15px #0a0b0d;transform:scaleX(0.85);transform-origin:0 0;">all</div>
<div class="t" style="left:914.00px;top:360.06px;font-size:13px;line-height:13px;color:#0a0b0d;-webkit-text-stroke:0.15px #0a0b0d;transform:scaleX(0.89);transform-origin:0 0;">803</div>
<svg class="i" style="left:1015px;top:363.26px" width="12" height="11" viewBox="0 0 12 11"><rect x="0.6" y="0.6" width="10.8" height="9.8" rx="1.2" fill="none" stroke="#d5203a" stroke-width="1.2"/><path d="M0.6 3.9 H11.4 M0.6 7.1 H11.4 M4.2 0.6 V10.4 M7.8 0.6 V10.4" stroke="#d5203a" stroke-width="1.1"/></svg>
<div class="r" style="left:321px;top:380.63px;width:774px;height:28.07px;background:#f8f9fb;"></div>
<div class="r" style="left:321px;top:407.43px;width:774px;height:1px;background:#d3d8dc;"></div>
<div class="t" style="left:333.20px;top:388.13px;font-size:13px;line-height:13px;color:#0a0b0d;-webkit-text-stroke:0.15px #0a0b0d;transform:scaleX(0.85);transform-origin:0 0;">success</div>
<div class="t" style="left:425.70px;top:388.13px;font-size:13px;line-height:13px;color:#0a0b0d;-webkit-text-stroke:0.15px #0a0b0d;transform:scaleX(0.89);transform-origin:0 0;">2021-06-25 13:02:17</div>
<div class="t" style="left:579.90px;top:388.13px;font-size:13px;line-height:13px;color:#0a0b0d;-webkit-text-stroke:0.15px #0a0b0d;transform:scaleX(0.89);transform-origin:0 0;">2021-06-25 13:02:</div>
<div class="t" style="left:687.80px;top:388.13px;font-size:13px;line-height:13px;color:#0a0b0d;-webkit-text-stroke:0.15px #0a0b0d;transform:scaleX(0.89);transform-origin:0 0;">00:00:00.131</div>
<div class="t" style="left:796.50px;top:388.13px;font-size:13px;line-height:13px;color:#0a0b0d;-webkit-text-stroke:0.15px #0a0b0d;transform:scaleX(0.85);transform-origin:0 0;">all</div>
<div class="t" style="left:914.00px;top:388.13px;font-size:13px;line-height:13px;color:#0a0b0d;-webkit-text-stroke:0.15px #0a0b0d;transform:scaleX(0.89);transform-origin:0 0;">803</div>
<svg class="i" style="left:1015px;top:391.33px" width="12" height="11" viewBox="0 0 12 11"><rect x="0.6" y="0.6" width="10.8" height="9.8" rx="1.2" fill="none" stroke="#d5203a" stroke-width="1.2"/><path d="M0.6 3.9 H11.4 M0.6 7.1 H11.4 M4.2 0.6 V10.4 M7.8 0.6 V10.4" stroke="#d5203a" stroke-width="1.1"/></svg>
<div class="r" style="left:321px;top:435.5px;width:774px;height:1px;background:#d3d8dc;"></div>
<div class="t" style="left:333.20px;top:416.20px;font-size:13px;line-height:13px;color:#0a0b0d;-webkit-text-stroke:0.15px #0a0b0d;transform:scaleX(0.85);transform-origin:0 0;">success</div>
<div class="t" style="left:425.70px;top:416.20px;font-size:13px;line-height:13px;color:#0a0b0d;-webkit-text-stroke:0.15px #0a0b0d;transform:scaleX(0.89);transform-origin:0 0;">2021-07-14 14:03:01</div>
<div class="t" style="left:579.90px;top:416.20px;font-size:13px;line-height:13px;color:#0a0b0d;-webkit-text-stroke:0.15px #0a0b0d;transform:scaleX(0.89);transform-origin:0 0;">2021-07-14 14:03:</div>
<div class="t" style="left:687.80px;top:416.20px;font-size:13px;line-height:13px;color:#0a0b0d;-webkit-text-stroke:0.15px #0a0b0d;transform:scaleX(0.89);transform-origin:0 0;">00:00:00.121</div>
<div class="t" style="left:796.50px;top:416.20px;font-size:13px;line-height:13px;color:#0a0b0d;-webkit-text-stroke:0.15px #0a0b0d;transform:scaleX(0.85);transform-origin:0 0;">all</div>
<div class="t" style="left:914.00px;top:416.20px;font-size:13px;line-height:13px;color:#0a0b0d;-webkit-text-stroke:0.15px #0a0b0d;transform:scaleX(0.89);transform-origin:0 0;">803</div>
<svg class="i" style="left:1015px;top:419.4px" width="12" height="11" viewBox="0 0 12 11"><rect x="0.6" y="0.6" width="10.8" height="9.8" rx="1.2" fill="none" stroke="#d5203a" stroke-width="1.2"/><path d="M0.6 3.9 H11.4 M0.6 7.1 H11.4 M4.2 0.6 V10.4 M7.8 0.6 V10.4" stroke="#d5203a" stroke-width="1.1"/></svg>
<div class="r" style="left:321px;top:436.77px;width:774px;height:28.07px;background:#f8f9fb;"></div>
<div class="r" style="left:321px;top:463.57px;width:774px;height:1px;background:#d3d8dc;"></div>
<div class="t" style="left:333.20px;top:444.27px;font-size:13px;line-height:13px;color:#0a0b0d;-webkit-text-stroke:0.15px #0a0b0d;transform:scaleX(0.85);transform-origin:0 0;">success</div>
<div class="t" style="left:425.70px;top:444.27px;font-size:13px;line-height:13px;color:#0a0b0d;-webkit-text-stroke:0.15px #0a0b0d;transform:scaleX(0.89);transform-origin:0 0;">2021-07-13 10:57:19</div>
<div class="t" style="left:579.90px;top:444.27px;font-size:13px;line-height:13px;color:#0a0b0d;-webkit-text-stroke:0.15px #0a0b0d;transform:scaleX(0.89);transform-origin:0 0;">2021-07-13 10:57:</div>
<div class="t" style="left:687.80px;top:444.27px;font-size:13px;line-height:13px;color:#0a0b0d;-webkit-text-stroke:0.15px #0a0b0d;transform:scaleX(0.89);transform-origin:0 0;">00:00:00.890</div>
<div class="t" style="left:796.50px;top:444.27px;font-size:13px;line-height:13px;color:#0a0b0d;-webkit-text-stroke:0.15px #0a0b0d;transform:scaleX(0.85);transform-origin:0 0;">all</div>
<div class="t" style="left:914.00px;top:444.27px;font-size:13px;line-height:13px;color:#0a0b0d;-webkit-text-stroke:0.15px #0a0b0d;transform:scaleX(0.89);transform-origin:0 0;">803</div>
<svg class="i" style="left:1015px;top:447.47px" width="12" height="11" viewBox="0 0 12 11"><rect x="0.6" y="0.6" width="10.8" height="9.8" rx="1.2" fill="none" stroke="#d5203a" stroke-width="1.2"/><path d="M0.6 3.9 H11.4 M0.6 7.1 H11.4 M4.2 0.6 V10.4 M7.8 0.6 V10.4" stroke="#d5203a" stroke-width="1.1"/></svg>
<div class="r" style="left:321px;top:491.64px;width:774px;height:1px;background:#d3d8dc;"></div>
<div class="t" style="left:333.20px;top:472.34px;font-size:13px;line-height:13px;color:#0a0b0d;-webkit-text-stroke:0.15px #0a0b0d;transform:scaleX(0.85);transform-origin:0 0;">success</div>
<div class="t" style="left:425.70px;top:472.34px;font-size:13px;line-height:13px;color:#0a0b0d;-webkit-text-stroke:0.15px #0a0b0d;transform:scaleX(0.89);transform-origin:0 0;">2021-07-22 11:37:51</div>
<div class="t" style="left:579.90px;top:472.34px;font-size:13px;line-height:13px;color:#0a0b0d;-webkit-text-stroke:0.15px #0a0b0d;transform:scaleX(0.89);transform-origin:0 0;">2021-07-22 11:37:</div>
<div class="t" style="left:687.80px;top:472.34px;font-size:13px;line-height:13px;color:#0a0b0d;-webkit-text-stroke:0.15px #0a0b0d;transform:scaleX(0.89);transform-origin:0 0;">00:00:00.109</div>
<div class="t" style="left:796.50px;top:472.34px;font-size:13px;line-height:13px;color:#0a0b0d;-webkit-text-stroke:0.15px #0a0b0d;transform:scaleX(0.85);transform-origin:0 0;">all</div>
<div class="t" style="left:914.00px;top:472.34px;font-size:13px;line-height:13px;color:#0a0b0d;-webkit-text-stroke:0.15px #0a0b0d;transform:scaleX(0.89);transform-origin:0 0;">803</div>
<svg class="i" style="left:1015px;top:475.54px" width="12" height="11" viewBox="0 0 12 11"><rect x="0.6" y="0.6" width="10.8" height="9.8" rx="1.2" fill="none" stroke="#d5203a" stroke-width="1.2"/><path d="M0.6 3.9 H11.4 M0.6 7.1 H11.4 M4.2 0.6 V10.4 M7.8 0.6 V10.4" stroke="#d5203a" stroke-width="1.1"/></svg>
<div class="r" style="left:321px;top:492.91px;width:774px;height:28.07px;background:#f8f9fb;"></div>
<div class="r" style="left:321px;top:519.71px;width:774px;height:1px;background:#d3d8dc;"></div>
<div class="t" style="left:333.20px;top:500.41px;font-size:13px;line-height:13px;color:#0a0b0d;-webkit-text-stroke:0.15px #0a0b0d;transform:scaleX(0.85);transform-origin:0 0;">success</div>
<div class="t" style="left:425.70px;top:500.41px;font-size:13px;line-height:13px;color:#0a0b0d;-webkit-text-stroke:0.15px #0a0b0d;transform:scaleX(0.89);transform-origin:0 0;">2021-07-16 14:45:01</div>
<div class="t" style="left:579.90px;top:500.41px;font-size:13px;line-height:13px;color:#0a0b0d;-webkit-text-stroke:0.15px #0a0b0d;transform:scaleX(0.89);transform-origin:0 0;">2021-07-16 14:45:</div>
<div class="t" style="left:687.80px;top:500.41px;font-size:13px;line-height:13px;color:#0a0b0d;-webkit-text-stroke:0.15px #0a0b0d;transform:scaleX(0.89);transform-origin:0 0;">00:00:00.113</div>
<div class="t" style="left:796.50px;top:500.41px;font-size:13px;line-height:13px;color:#0a0b0d;-webkit-text-stroke:0.15px #0a0b0d;transform:scaleX(0.85);transform-origin:0 0;">all</div>
<div class="t" style="left:914.00px;top:500.41px;font-size:13px;line-height:13px;color:#0a0b0d;-webkit-text-stroke:0.15px #0a0b0d;transform:scaleX(0.89);transform-origin:0 0;">803</div>
<svg class="i" style="left:1015px;top:503.61px" width="12" height="11" viewBox="0 0 12 11"><rect x="0.6" y="0.6" width="10.8" height="9.8" rx="1.2" fill="none" stroke="#d5203a" stroke-width="1.2"/><path d="M0.6 3.9 H11.4 M0.6 7.1 H11.4 M4.2 0.6 V10.4 M7.8 0.6 V10.4" stroke="#d5203a" stroke-width="1.1"/></svg>
<div class="r" style="left:321px;top:547.78px;width:774px;height:1px;background:#d3d8dc;"></div>
<div class="t" style="left:333.20px;top:528.48px;font-size:13px;line-height:13px;color:#0a0b0d;-webkit-text-stroke:0.15px #0a0b0d;transform:scaleX(0.85);transform-origin:0 0;">success</div>
<div class="t" style="left:425.70px;top:528.48px;font-size:13px;line-height:13px;color:#0a0b0d;-webkit-text-stroke:0.15px #0a0b0d;transform:scaleX(0.89);transform-origin:0 0;">2021-08-10 12:56:31</div>
<div class="t" style="left:579.90px;top:528.48px;font-size:13px;line-height:13px;color:#0a0b0d;-webkit-text-stroke:0.15px #0a0b0d;transform:scaleX(0.89);transform-origin:0 0;">2021-08-10 12:56:</div>
<div class="t" style="left:687.80px;top:528.48px;font-size:13px;line-height:13px;color:#0a0b0d;-webkit-text-stroke:0.15px #0a0b0d;transform:scaleX(0.89);transform-origin:0 0;">00:00:00.880</div>
<div class="t" style="left:796.50px;top:528.48px;font-size:13px;line-height:13px;color:#0a0b0d;-webkit-text-stroke:0.15px #0a0b0d;transform:scaleX(0.85);transform-origin:0 0;">all</div>
<div class="t" style="left:914.00px;top:528.48px;font-size:13px;line-height:13px;color:#0a0b0d;-webkit-text-stroke:0.15px #0a0b0d;transform:scaleX(0.89);transform-origin:0 0;">803</div>
<svg class="i" style="left:1015px;top:531.68px" width="12" height="11" viewBox="0 0 12 11"><rect x="0.6" y="0.6" width="10.8" height="9.8" rx="1.2" fill="none" stroke="#d5203a" stroke-width="1.2"/><path d="M0.6 3.9 H11.4 M0.6 7.1 H11.4 M4.2 0.6 V10.4 M7.8 0.6 V10.4" stroke="#d5203a" stroke-width="1.1"/></svg>
<div class="r" style="left:321px;top:549.05px;width:774px;height:8.950000000000045px;background:#f8f9fb;"></div>
<div class="r" style="left:321px;top:557px;width:1592px;height:1px;background:#e3e6e9;"></div>
<div class="r" style="left:1895px;top:128px;width:17px;height:430px;background:#ececec;"></div>
<div class="r" style="left:1897px;top:145px;width:13px;height:338px;background:#a3a3a3;"></div>
<svg class="i" style="left:1899px;top:134px" width="9" height="5" viewBox="0 0 9 5"><path d="M0.5 4.6 L4.5 0.6 L8.5 4.6Z" fill="#6f6f6f"/></svg>
<svg class="i" style="left:1899px;top:547px" width="9" height="5" viewBox="0 0 9 5"><path d="M0.5 0.4 L4.5 4.4 L8.5 0.4Z" fill="#000"/></svg>
<div class="t" style="left:320.60px;top:577.52px;font-size:15.45px;line-height:15.45px;color:#161a38;-webkit-text-stroke:0.35px #161a38;">Table data</div>
<div class="r" style="left:404px;top:574px;width:104px;height:24px;background:#fff;box-sizing:border-box;border:1.5px solid #5aa2ec;border-radius:3px;"></div>
<div class="t" style="left:411.60px;top:580.53px;font-size:10px;line-height:10px;color:#8e949c;">Search...</div>
<svg class="i" style="left:490.5px;top:578.5px" width="11" height="11" viewBox="0 0 11 11"><path d="M0 0 H11 L6.8 4.9 V10.8 L4.2 9.2 V4.9Z" fill="#1a6fd8"/></svg>
<div class="t" style="left:1516.60px;top:579.01px;font-size:10.5px;line-height:10.5px;color:#1b1f30;">Preview</div>
<div class="r" style="left:1557px;top:574px;width:76px;height:23px;background:#fff;box-sizing:border-box;border:2px solid #2a6fc0;border-radius:3px;"></div>
<div class="t" style="left:1565.00px;top:580.43px;font-size:11.3px;line-height:11.3px;color:#1b1f30;">1000</div>
<div class="t" style="left:1635.80px;top:579.01px;font-size:10.5px;line-height:10.5px;color:#1b1f30;">records</div>
<div class="t" style="left:1671.00px;top:578.66px;font-size:12.8px;line-height:12.8px;color:#1b1f30;">(802)</div>
<div class="r" style="left:1706px;top:576px;width:16px;height:16px;background:#f4f4f4;border-radius:3px;"></div>
<div class="t" style="left:1726.40px;top:577.67px;font-size:12.2px;line-height:12.2px;color:#1b1f30;">Hide empty columns</div>
<svg class="i" style="left:1853px;top:581.6px" width="13" height="8" viewBox="0 0 13 8"><path d="M0 4 L3.6 0.8 V7.2Z M13 4 L9.4 0.8 V7.2Z" fill="#0a48b8"/><rect x="3" y="3.2" width="7" height="1.6" fill="#0a48b8"/></svg>
<div class="t" style="left:1869.00px;top:580.20px;font-size:11.1px;line-height:11.1px;color:#0f5bc4;">Resize</div>
<div class="r" style="left:320px;top:607px;width:1594px;height:466px;background:#fff;box-sizing:border-box;border:1px solid #c9ced3;border-radius:3px;"></div>
<div class="r" style="left:321px;top:608px;width:1592px;height:32px;background:#f3f5f5;"></div>
<div class="r" style="left:321px;top:640px;width:1592px;height:2px;background:#d5dade;"></div>
<div class="t" style="left:333.30px;top:618.93px;font-size:12.6px;line-height:12.6px;color:#646b73;letter-spacing:-0.2px;">contract_id</div>
<div class="t" style="left:453.80px;top:618.93px;font-size:12.6px;line-height:12.6px;color:#646b73;letter-spacing:-0.2px;">employment_id</div>
<div class="t" style="left:598.00px;top:618.93px;font-size:12.6px;line-height:12.6px;color:#646b73;letter-spacing:-0.2px;">manager_id</div>
<div class="t" style="left:721.30px;top:618.93px;font-size:12.6px;line-height:12.6px;color:#646b73;letter-spacing:-0.2px;">date_start</div>
<div class="t" style="left:835.80px;top:618.93px;font-size:12.6px;line-height:12.6px;color:#646b73;letter-spacing:-0.2px;">department</div>
<div class="t" style="left:960.30px;top:618.93px;font-size:12.6px;line-height:12.6px;color:#646b73;letter-spacing:-0.2px;">job_code</div>
<div class="t" style="left:1069.50px;top:618.93px;font-size:12.6px;line-height:12.6px;color:#646b73;letter-spacing:-0.2px;">fte</div>
<div class="t" style="left:1144.80px;top:618.93px;font-size:12.6px;line-height:12.6px;color:#646b73;letter-spacing:-0.2px;">date_end</div>
<div class="r" style="left:441.0px;top:616px;width:1px;height:16px;background:#d5dadd;"></div>
<div class="r" style="left:585.2px;top:616px;width:1px;height:16px;background:#d5dadd;"></div>
<div class="r" style="left:708.5px;top:616px;width:1px;height:16px;background:#d5dadd;"></div>
<div class="r" style="left:823.0px;top:616px;width:1px;height:16px;background:#d5dadd;"></div>
<div class="r" style="left:947.5px;top:616px;width:1px;height:16px;background:#d5dadd;"></div>
<div class="r" style="left:1056.7px;top:616px;width:1px;height:16px;background:#d5dadd;"></div>
<div class="r" style="left:1132.0px;top:616px;width:1px;height:16px;background:#d5dadd;"></div>
<div class="r" style="left:1242.5px;top:616px;width:1px;height:16px;background:#d5dadd;"></div>
<div class="r" style="left:321px;top:667.6px;width:922px;height:1.5px;background:#e4e7ea;"></div>
<div class="t" style="left:333.30px;top:648.90px;font-size:13px;line-height:13px;color:#202328;-webkit-text-stroke:0.1px #202328;transform:scaleX(0.88);transform-origin:0 0;">30000763</div>
<div class="t" style="left:453.80px;top:648.90px;font-size:13px;line-height:13px;color:#202328;-webkit-text-stroke:0.1px #202328;transform:scaleX(0.88);transform-origin:0 0;">29100388</div>
<div class="t" style="left:598.00px;top:648.90px;font-size:13px;line-height:13px;color:#202328;-webkit-text-stroke:0.1px #202328;transform:scaleX(0.88);transform-origin:0 0;">11560416</div>
<div class="t" style="left:721.30px;top:648.90px;font-size:13px;line-height:13px;color:#202328;-webkit-text-stroke:0.1px #202328;transform:scaleX(0.88);transform-origin:0 0;">2013-02-06</div>
<div class="t" style="left:835.80px;top:648.90px;font-size:13px;line-height:13px;color:#202328;-webkit-text-stroke:0.1px #202328;transform:scaleX(0.81);transform-origin:0 0;">EN_DEV</div>
<div class="t" style="left:960.30px;top:648.90px;font-size:13px;line-height:13px;color:#202328;-webkit-text-stroke:0.1px #202328;transform:scaleX(0.88);transform-origin:0 0;">8121</div>
<div class="t" style="left:1069.50px;top:648.90px;font-size:13px;line-height:13px;color:#202328;-webkit-text-stroke:0.1px #202328;transform:scaleX(0.88);transform-origin:0 0;">0.6</div>
<div class="r" style="left:321px;top:668.6px;width:922px;height:28.1px;background:#f9fafc;"></div>
<div class="r" style="left:321px;top:695.7px;width:922px;height:1.5px;background:#e4e7ea;"></div>
<div class="t" style="left:333.30px;top:677.00px;font-size:13px;line-height:13px;color:#202328;-webkit-text-stroke:0.1px #202328;transform:scaleX(0.88);transform-origin:0 0;">30004186</div>
<div class="t" style="left:453.80px;top:677.00px;font-size:13px;line-height:13px;color:#202328;-webkit-text-stroke:0.1px #202328;transform:scaleX(0.88);transform-origin:0 0;">20691035</div>
<div class="t" style="left:598.00px;top:677.00px;font-size:13px;line-height:13px;color:#202328;-webkit-text-stroke:0.1px #202328;transform:scaleX(0.88);transform-origin:0 0;">15438178</div>
<div class="t" style="left:721.30px;top:677.00px;font-size:13px;line-height:13px;color:#202328;-webkit-text-stroke:0.1px #202328;transform:scaleX(0.88);transform-origin:0 0;">2015-09-03</div>
<div class="t" style="left:835.80px;top:677.00px;font-size:13px;line-height:13px;color:#202328;-webkit-text-stroke:0.1px #202328;transform:scaleX(0.81);transform-origin:0 0;">EN_SABTEAM</div>
<div class="t" style="left:960.30px;top:677.00px;font-size:13px;line-height:13px;color:#202328;-webkit-text-stroke:0.1px #202328;transform:scaleX(0.88);transform-origin:0 0;">7244</div>
<div class="t" style="left:1069.50px;top:677.00px;font-size:13px;line-height:13px;color:#202328;-webkit-text-stroke:0.1px #202328;transform:scaleX(0.88);transform-origin:0 0;">0.4</div>
<div class="r" style="left:321px;top:723.8px;width:922px;height:1.5px;background:#e4e7ea;"></div>
<div class="t" style="left:333.30px;top:705.10px;font-size:13px;line-height:13px;color:#202328;-webkit-text-stroke:0.1px #202328;transform:scaleX(0.88);transform-origin:0 0;">30014488</div>
<div class="t" style="left:453.80px;top:705.10px;font-size:13px;line-height:13px;color:#202328;-webkit-text-stroke:0.1px #202328;transform:scaleX(0.88);transform-origin:0 0;">22690056</div>
<div class="t" style="left:598.00px;top:705.10px;font-size:13px;line-height:13px;color:#202328;-webkit-text-stroke:0.1px #202328;transform:scaleX(0.88);transform-origin:0 0;">15547748</div>
<div class="t" style="left:721.30px;top:705.10px;font-size:13px;line-height:13px;color:#202328;-webkit-text-stroke:0.1px #202328;transform:scaleX(0.88);transform-origin:0 0;">2012-06-02</div>
<div class="t" style="left:835.80px;top:705.10px;font-size:13px;line-height:13px;color:#202328;-webkit-text-stroke:0.1px #202328;transform:scaleX(0.81);transform-origin:0 0;">EN_INKTEAM</div>
<div class="t" style="left:960.30px;top:705.10px;font-size:13px;line-height:13px;color:#202328;-webkit-text-stroke:0.1px #202328;transform:scaleX(0.88);transform-origin:0 0;">9141</div>
<div class="t" style="left:1069.50px;top:705.10px;font-size:13px;line-height:13px;color:#202328;-webkit-text-stroke:0.1px #202328;transform:scaleX(0.88);transform-origin:0 0;">0.6</div>
<div class="t" style="left:1144.80px;top:705.10px;font-size:13px;line-height:13px;color:#202328;-webkit-text-stroke:0.1px #202328;transform:scaleX(0.88);transform-origin:0 0;">2020-06-27</div>
<div class="r" style="left:321px;top:724.8px;width:922px;height:28.1px;background:#f9fafc;"></div>
<div class="r" style="left:321px;top:751.9px;width:922px;height:1.5px;background:#e4e7ea;"></div>
<div class="t" style="left:333.30px;top:733.20px;font-size:13px;line-height:13px;color:#202328;-webkit-text-stroke:0.1px #202328;transform:scaleX(0.88);transform-origin:0 0;">30022612</div>
<div class="t" style="left:453.80px;top:733.20px;font-size:13px;line-height:13px;color:#202328;-webkit-text-stroke:0.1px #202328;transform:scaleX(0.88);transform-origin:0 0;">23876322</div>
<div class="t" style="left:598.00px;top:733.20px;font-size:13px;line-height:13px;color:#202328;-webkit-text-stroke:0.1px #202328;transform:scaleX(0.88);transform-origin:0 0;">19214260</div>
<div class="t" style="left:721.30px;top:733.20px;font-size:13px;line-height:13px;color:#202328;-webkit-text-stroke:0.1px #202328;transform:scaleX(0.88);transform-origin:0 0;">2017-07-22</div>
<div class="t" style="left:835.80px;top:733.20px;font-size:13px;line-height:13px;color:#202328;-webkit-text-stroke:0.1px #202328;transform:scaleX(0.81);transform-origin:0 0;">EN_TRATEAM</div>
<div class="t" style="left:960.30px;top:733.20px;font-size:13px;line-height:13px;color:#202328;-webkit-text-stroke:0.1px #202328;transform:scaleX(0.88);transform-origin:0 0;">4390</div>
<div class="t" style="left:1069.50px;top:733.20px;font-size:13px;line-height:13px;color:#202328;-webkit-text-stroke:0.1px #202328;transform:scaleX(0.88);transform-origin:0 0;">1</div>
<div class="r" style="left:321px;top:780.0px;width:922px;height:1.5px;background:#e4e7ea;"></div>
<div class="t" style="left:333.30px;top:761.30px;font-size:13px;line-height:13px;color:#202328;-webkit-text-stroke:0.1px #202328;transform:scaleX(0.88);transform-origin:0 0;">30032896</div>
<div class="t" style="left:453.80px;top:761.30px;font-size:13px;line-height:13px;color:#202328;-webkit-text-stroke:0.1px #202328;transform:scaleX(0.88);transform-origin:0 0;">21264686</div>
<div class="t" style="left:598.00px;top:761.30px;font-size:13px;line-height:13px;color:#202328;-webkit-text-stroke:0.1px #202328;transform:scaleX(0.88);transform-origin:0 0;">12092604</div>
<div class="t" style="left:721.30px;top:761.30px;font-size:13px;line-height:13px;color:#202328;-webkit-text-stroke:0.1px #202328;transform:scaleX(0.88);transform-origin:0 0;">2016-05-21</div>
<div class="t" style="left:835.80px;top:761.30px;font-size:13px;line-height:13px;color:#202328;-webkit-text-stroke:0.1px #202328;transform:scaleX(0.81);transform-origin:0 0;">EN_KWA</div>
<div class="t" style="left:960.30px;top:761.30px;font-size:13px;line-height:13px;color:#202328;-webkit-text-stroke:0.1px #202328;transform:scaleX(0.88);transform-origin:0 0;">2719</div>
<div class="t" style="left:1069.50px;top:761.30px;font-size:13px;line-height:13px;color:#202328;-webkit-text-stroke:0.1px #202328;transform:scaleX(0.88);transform-origin:0 0;">0.4</div>
<div class="r" style="left:321px;top:781.0px;width:922px;height:28.1px;background:#f9fafc;"></div>
<div class="r" style="left:321px;top:808.1px;width:922px;height:1.5px;background:#e4e7ea;"></div>
<div class="t" style="left:333.30px;top:789.40px;font-size:13px;line-height:13px;color:#202328;-webkit-text-stroke:0.1px #202328;transform:scaleX(0.88);transform-origin:0 0;">30035819</div>
<div class="t" style="left:453.80px;top:789.40px;font-size:13px;line-height:13px;color:#202328;-webkit-text-stroke:0.1px #202328;transform:scaleX(0.88);transform-origin:0 0;">23895053</div>
<div class="t" style="left:598.00px;top:789.40px;font-size:13px;line-height:13px;color:#202328;-webkit-text-stroke:0.1px #202328;transform:scaleX(0.88);transform-origin:0 0;">19214260</div>
<div class="t" style="left:721.30px;top:789.40px;font-size:13px;line-height:13px;color:#202328;-webkit-text-stroke:0.1px #202328;transform:scaleX(0.88);transform-origin:0 0;">2020-01-12</div>
<div class="t" style="left:835.80px;top:789.40px;font-size:13px;line-height:13px;color:#202328;-webkit-text-stroke:0.1px #202328;transform:scaleX(0.81);transform-origin:0 0;">EN_SAI</div>
<div class="t" style="left:960.30px;top:789.40px;font-size:13px;line-height:13px;color:#202328;-webkit-text-stroke:0.1px #202328;transform:scaleX(0.88);transform-origin:0 0;">1033</div>
<div class="t" style="left:1069.50px;top:789.40px;font-size:13px;line-height:13px;color:#202328;-webkit-text-stroke:0.1px #202328;transform:scaleX(0.88);transform-origin:0 0;">0.5</div>
<div class="t" style="left:1144.80px;top:789.40px;font-size:13px;line-height:13px;color:#202328;-webkit-text-stroke:0.1px #202328;transform:scaleX(0.88);transform-origin:0 0;">2020-04-17</div>
<div class="r" style="left:321px;top:836.2px;width:922px;height:1.5px;background:#e4e7ea;"></div>
<div class="t" style="left:333.30px;top:817.50px;font-size:13px;line-height:13px;color:#202328;-webkit-text-stroke:0.1px #202328;transform:scaleX(0.88);transform-origin:0 0;">30056116</div>
<div class="t" style="left:453.80px;top:817.50px;font-size:13px;line-height:13px;color:#202328;-webkit-text-stroke:0.1px #202328;transform:scaleX(0.88);transform-origin:0 0;">22902851</div>
<div class="t" style="left:598.00px;top:817.50px;font-size:13px;line-height:13px;color:#202328;-webkit-text-stroke:0.1px #202328;transform:scaleX(0.88);transform-origin:0 0;">11193868</div>
<div class="t" style="left:721.30px;top:817.50px;font-size:13px;line-height:13px;color:#202328;-webkit-text-stroke:0.1px #202328;transform:scaleX(0.88);transform-origin:0 0;">2014-10-24</div>
<div class="t" style="left:835.80px;top:817.50px;font-size:13px;line-height:13px;color:#202328;-webkit-text-stroke:0.1px #202328;transform:scaleX(0.81);transform-origin:0 0;">EN_ASSTEAM</div>
<div class="t" style="left:960.30px;top:817.50px;font-size:13px;line-height:13px;color:#202328;-webkit-text-stroke:0.1px #202328;transform:scaleX(0.88);transform-origin:0 0;">8438</div>
<div class="t" style="left:1069.50px;top:817.50px;font-size:13px;line-height:13px;color:#202328;-webkit-text-stroke:0.1px #202328;transform:scaleX(0.88);transform-origin:0 0;">0.3</div>
<div class="r" style="left:321px;top:837.2px;width:922px;height:28.1px;background:#f9fafc;"></div>
<div class="r" style="left:321px;top:864.3px;width:922px;height:1.5px;background:#e4e7ea;"></div>
<div class="t" style="left:333.30px;top:845.60px;font-size:13px;line-height:13px;color:#202328;-webkit-text-stroke:0.1px #202328;transform:scaleX(0.88);transform-origin:0 0;">30071147</div>
<div class="t" style="left:453.80px;top:845.60px;font-size:13px;line-height:13px;color:#202328;-webkit-text-stroke:0.1px #202328;transform:scaleX(0.88);transform-origin:0 0;">25863977</div>
<div class="t" style="left:598.00px;top:845.60px;font-size:13px;line-height:13px;color:#202328;-webkit-text-stroke:0.1px #202328;transform:scaleX(0.88);transform-origin:0 0;">16875678</div>
<div class="t" style="left:721.30px;top:845.60px;font-size:13px;line-height:13px;color:#202328;-webkit-text-stroke:0.1px #202328;transform:scaleX(0.88);transform-origin:0 0;">2010-08-10</div>
<div class="t" style="left:835.80px;top:845.60px;font-size:13px;line-height:13px;color:#202328;-webkit-text-stroke:0.1px #202328;transform:scaleX(0.81);transform-origin:0 0;">EN_DEV</div>
<div class="t" style="left:960.30px;top:845.60px;font-size:13px;line-height:13px;color:#202328;-webkit-text-stroke:0.1px #202328;transform:scaleX(0.88);transform-origin:0 0;">2520</div>
<div class="t" style="left:1069.50px;top:845.60px;font-size:13px;line-height:13px;color:#202328;-webkit-text-stroke:0.1px #202328;transform:scaleX(0.88);transform-origin:0 0;">0.6</div>
<div class="t" style="left:1144.80px;top:845.60px;font-size:13px;line-height:13px;color:#202328;-webkit-text-stroke:0.1px #202328;transform:scaleX(0.88);transform-origin:0 0;">2019-12-04</div>
<div class="r" style="left:321px;top:892.4px;width:922px;height:1.5px;background:#e4e7ea;"></div>
<div class="t" style="left:333.30px;top:873.70px;font-size:13px;line-height:13px;color:#202328;-webkit-text-stroke:0.1px #202328;transform:scaleX(0.88);transform-origin:0 0;">30072411</div>
<div class="t" style="left:453.80px;top:873.70px;font-size:13px;line-height:13px;color:#202328;-webkit-text-stroke:0.1px #202328;transform:scaleX(0.88);transform-origin:0 0;">24532817</div>
<div class="t" style="left:598.00px;top:873.70px;font-size:13px;line-height:13px;color:#202328;-webkit-text-stroke:0.1px #202328;transform:scaleX(0.88);transform-origin:0 0;">15438178</div>
<div class="t" style="left:721.30px;top:873.70px;font-size:13px;line-height:13px;color:#202328;-webkit-text-stroke:0.1px #202328;transform:scaleX(0.88);transform-origin:0 0;">2016-08-10</div>
<div class="t" style="left:835.80px;top:873.70px;font-size:13px;line-height:13px;color:#202328;-webkit-text-stroke:0.1px #202328;transform:scaleX(0.81);transform-origin:0 0;">EN_INK</div>
<div class="t" style="left:960.30px;top:873.70px;font-size:13px;line-height:13px;color:#202328;-webkit-text-stroke:0.1px #202328;transform:scaleX(0.88);transform-origin:0 0;">7243</div>
<div class="t" style="left:1069.50px;top:873.70px;font-size:13px;line-height:13px;color:#202328;-webkit-text-stroke:0.1px #202328;transform:scaleX(0.88);transform-origin:0 0;">0.4</div>
<div class="r" style="left:321px;top:893.4px;width:922px;height:28.1px;background:#f9fafc;"></div>
<div class="r" style="left:321px;top:920.5px;width:922px;height:1.5px;background:#e4e7ea;"></div>
<div class="t" style="left:333.30px;top:901.80px;font-size:13px;line-height:13px;color:#202328;-webkit-text-stroke:0.1px #202328;transform:scaleX(0.88);transform-origin:0 0;">30106049</div>
<div class="t" style="left:453.80px;top:901.80px;font-size:13px;line-height:13px;color:#202328;-webkit-text-stroke:0.1px #202328;transform:scaleX(0.88);transform-origin:0 0;">25131346</div>
<div class="t" style="left:598.00px;top:901.80px;font-size:13px;line-height:13px;color:#202328;-webkit-text-stroke:0.1px #202328;transform:scaleX(0.88);transform-origin:0 0;">19214260</div>
<div class="t" style="left:721.30px;top:901.80px;font-size:13px;line-height:13px;color:#202328;-webkit-text-stroke:0.1px #202328;transform:scaleX(0.88);transform-origin:0 0;">2015-07-28</div>
<div class="t" style="left:835.80px;top:901.80px;font-size:13px;line-height:13px;color:#202328;-webkit-text-stroke:0.1px #202328;transform:scaleX(0.81);transform-origin:0 0;">EN_ADM</div>
<div class="t" style="left:960.30px;top:901.80px;font-size:13px;line-height:13px;color:#202328;-webkit-text-stroke:0.1px #202328;transform:scaleX(0.88);transform-origin:0 0;">1942</div>
<div class="t" style="left:1069.50px;top:901.80px;font-size:13px;line-height:13px;color:#202328;-webkit-text-stroke:0.1px #202328;transform:scaleX(0.88);transform-origin:0 0;">1</div>
<div class="r" style="left:321px;top:948.6px;width:922px;height:1.5px;background:#e4e7ea;"></div>
<div class="t" style="left:333.30px;top:929.90px;font-size:13px;line-height:13px;color:#202328;-webkit-text-stroke:0.1px #202328;transform:scaleX(0.88);transform-origin:0 0;">30132807</div>
<div class="t" style="left:453.80px;top:929.90px;font-size:13px;line-height:13px;color:#202328;-webkit-text-stroke:0.1px #202328;transform:scaleX(0.88);transform-origin:0 0;">29880322</div>
<div class="t" style="left:598.00px;top:929.90px;font-size:13px;line-height:13px;color:#202328;-webkit-text-stroke:0.1px #202328;transform:scaleX(0.88);transform-origin:0 0;">16875678</div>
<div class="t" style="left:721.30px;top:929.90px;font-size:13px;line-height:13px;color:#202328;-webkit-text-stroke:0.1px #202328;transform:scaleX(0.88);transform-origin:0 0;">2020-06-30</div>
<div class="t" style="left:835.80px;top:929.90px;font-size:13px;line-height:13px;color:#202328;-webkit-text-stroke:0.1px #202328;transform:scaleX(0.81);transform-origin:0 0;">EN_PO</div>
<div class="t" style="left:960.30px;top:929.90px;font-size:13px;line-height:13px;color:#202328;-webkit-text-stroke:0.1px #202328;transform:scaleX(0.88);transform-origin:0 0;">5274</div>
<div class="t" style="left:1069.50px;top:929.90px;font-size:13px;line-height:13px;color:#202328;-webkit-text-stroke:0.1px #202328;transform:scaleX(0.88);transform-origin:0 0;">0.2</div>
<div class="r" style="left:321px;top:949.6px;width:922px;height:28.1px;background:#f9fafc;"></div>
<div class="r" style="left:321px;top:976.7px;width:922px;height:1.5px;background:#e4e7ea;"></div>
<div class="t" style="left:333.30px;top:958.00px;font-size:13px;line-height:13px;color:#202328;-webkit-text-stroke:0.1px #202328;transform:scaleX(0.88);transform-origin:0 0;">30146995</div>
<div class="t" style="left:453.80px;top:958.00px;font-size:13px;line-height:13px;color:#202328;-webkit-text-stroke:0.1px #202328;transform:scaleX(0.88);transform-origin:0 0;">27326567</div>
<div class="t" style="left:598.00px;top:958.00px;font-size:13px;line-height:13px;color:#202328;-webkit-text-stroke:0.1px #202328;transform:scaleX(0.88);transform-origin:0 0;">19214260</div>
<div class="t" style="left:721.30px;top:958.00px;font-size:13px;line-height:13px;color:#202328;-webkit-text-stroke:0.1px #202328;transform:scaleX(0.88);transform-origin:0 0;">2014-03-19</div>
<div class="t" style="left:835.80px;top:958.00px;font-size:13px;line-height:13px;color:#202328;-webkit-text-stroke:0.1px #202328;transform:scaleX(0.81);transform-origin:0 0;">EN_TRATEAM</div>
<div class="t" style="left:960.30px;top:958.00px;font-size:13px;line-height:13px;color:#202328;-webkit-text-stroke:0.1px #202328;transform:scaleX(0.88);transform-origin:0 0;">402</div>
<div class="t" style="left:1069.50px;top:958.00px;font-size:13px;line-height:13px;color:#202328;-webkit-text-stroke:0.1px #202328;transform:scaleX(0.88);transform-origin:0 0;">0.7</div>
<div class="r" style="left:321px;top:1004.8px;width:922px;height:1.5px;background:#e4e7ea;"></div>
<div class="t" style="left:333.30px;top:986.10px;font-size:13px;line-height:13px;color:#202328;-webkit-text-stroke:0.1px #202328;transform:scaleX(0.88);transform-origin:0 0;">30149745</div>
<div class="t" style="left:453.80px;top:986.10px;font-size:13px;line-height:13px;color:#202328;-webkit-text-stroke:0.1px #202328;transform:scaleX(0.88);transform-origin:0 0;">25534121</div>
<div class="t" style="left:598.00px;top:986.10px;font-size:13px;line-height:13px;color:#202328;-webkit-text-stroke:0.1px #202328;transform:scaleX(0.88);transform-origin:0 0;">14769827</div>
<div class="t" style="left:721.30px;top:986.10px;font-size:13px;line-height:13px;color:#202328;-webkit-text-stroke:0.1px #202328;transform:scaleX(0.88);transform-origin:0 0;">2015-10-16</div>
<div class="t" style="left:835.80px;top:986.10px;font-size:13px;line-height:13px;color:#202328;-webkit-text-stroke:0.1px #202328;transform:scaleX(0.81);transform-origin:0 0;">EN_HRTEAM</div>
<div class="t" style="left:960.30px;top:986.10px;font-size:13px;line-height:13px;color:#202328;-webkit-text-stroke:0.1px #202328;transform:scaleX(0.88);transform-origin:0 0;">8216</div>
<div class="t" style="left:1069.50px;top:986.10px;font-size:13px;line-height:13px;color:#202328;-webkit-text-stroke:0.1px #202328;transform:scaleX(0.88);transform-origin:0 0;">0.5</div>
<div class="r" style="left:321px;top:1005.8px;width:922px;height:28.1px;background:#f9fafc;"></div>
<div class="r" style="left:321px;top:1032.9px;width:922px;height:1.5px;background:#e4e7ea;"></div>
<div class="t" style="left:333.30px;top:1014.20px;font-size:13px;line-height:13px;color:#202328;-webkit-text-stroke:0.1px #202328;transform:scaleX(0.88);transform-origin:0 0;">30151082</div>
<div class="t" style="left:453.80px;top:1014.20px;font-size:13px;line-height:13px;color:#202328;-webkit-text-stroke:0.1px #202328;transform:scaleX(0.88);transform-origin:0 0;">24433927</div>
<div class="t" style="left:598.00px;top:1014.20px;font-size:13px;line-height:13px;color:#202328;-webkit-text-stroke:0.1px #202328;transform:scaleX(0.88);transform-origin:0 0;">16813712</div>
<div class="t" style="left:721.30px;top:1014.20px;font-size:13px;line-height:13px;color:#202328;-webkit-text-stroke:0.1px #202328;transform:scaleX(0.88);transform-origin:0 0;">2010-11-22</div>
<div class="t" style="left:835.80px;top:1014.20px;font-size:13px;line-height:13px;color:#202328;-webkit-text-stroke:0.1px #202328;transform:scaleX(0.81);transform-origin:0 0;">EN_ASS</div>
<div class="t" style="left:960.30px;top:1014.20px;font-size:13px;line-height:13px;color:#202328;-webkit-text-stroke:0.1px #202328;transform:scaleX(0.88);transform-origin:0 0;">1769</div>
<div class="t" style="left:1069.50px;top:1014.20px;font-size:13px;line-height:13px;color:#202328;-webkit-text-stroke:0.1px #202328;transform:scaleX(0.88);transform-origin:0 0;">0.8</div>
<div class="r" style="left:321px;top:1061.0px;width:922px;height:1.5px;background:#e4e7ea;"></div>
<div class="t" style="left:333.30px;top:1042.30px;font-size:13px;line-height:13px;color:#202328;-webkit-text-stroke:0.1px #202328;transform:scaleX(0.88);transform-origin:0 0;">30157150</div>
<div class="t" style="left:453.80px;top:1042.30px;font-size:13px;line-height:13px;color:#202328;-webkit-text-stroke:0.1px #202328;transform:scaleX(0.88);transform-origin:0 0;">26312723</div>
<div class="t" style="left:598.00px;top:1042.30px;font-size:13px;line-height:13px;color:#202328;-webkit-text-stroke:0.1px #202328;transform:scaleX(0.88);transform-origin:0 0;">15438178</div>
<div class="t" style="left:721.30px;top:1042.30px;font-size:13px;line-height:13px;color:#202328;-webkit-text-stroke:0.1px #202328;transform:scaleX(0.88);transform-origin:0 0;">2013-02-05</div>
<div class="t" style="left:835.80px;top:1042.30px;font-size:13px;line-height:13px;color:#202328;-webkit-text-stroke:0.1px #202328;transform:scaleX(0.81);transform-origin:0 0;">EN_MAR</div>
<div class="t" style="left:960.30px;top:1042.30px;font-size:13px;line-height:13px;color:#202328;-webkit-text-stroke:0.1px #202328;transform:scaleX(0.88);transform-origin:0 0;">2736</div>
<div class="t" style="left:1069.50px;top:1042.30px;font-size:13px;line-height:13px;color:#202328;-webkit-text-stroke:0.1px #202328;transform:scaleX(0.88);transform-origin:0 0;">0.9</div>
<div class="r" style="left:321px;top:1062.0px;width:922px;height:10.0px;background:#f9fafc;"></div>
<div class="r" style="left:1895px;top:642px;width:17px;height:430px;background:#ececec;"></div>
<div class="r" style="left:1897px;top:658px;width:13px;height:17px;background:#a3a3a3;"></div>
<svg class="i" style="left:1899px;top:648px" width="9" height="5" viewBox="0 0 9 5"><path d="M0.5 4.6 L4.5 0.6 L8.5 4.6Z" fill="#6f6f6f"/></svg>
<svg class="i" style="left:1899px;top:1061px" width="9" height="5" viewBox="0 0 9 5"><path d="M0.5 0.4 L4.5 4.4 L8.5 0.4Z" fill="#000"/></svg>
<div id="hl"></div>
<div id="edge"></div>
<div id="blk"></div>
<div id="bot"></div>
</div>
</body></html>
